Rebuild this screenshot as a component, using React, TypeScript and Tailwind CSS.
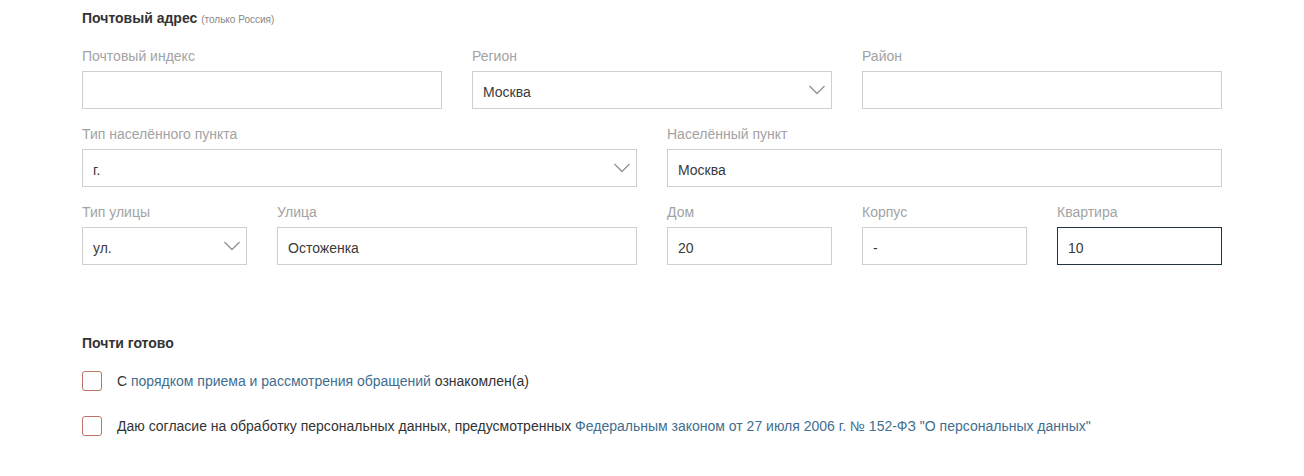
import { ReactNode } from 'react'

function Chevron() {
  return (
    <svg width="18" height="11" viewBox="0 0 18 11" className="absolute right-[4px] top-1/2 -translate-y-1/2 mr-[1px]">
      <path d="M1.5 1.5 L9 9 L16.5 1.5" fill="none" stroke="#949494" strokeWidth="1.4" />
    </svg>
  )
}

function Field({
  label,
  value = '',
  span,
  select = false,
  active = false,
}: {
  label: string
  value?: string
  span: string
  select?: boolean
  active?: boolean
}) {
  return (
    <div className={span}>
      <div className="text-[14px] leading-[20px] text-[#a3a3a3] mt-[4px] mb-[5px]">{label}</div>
      <div
        className={`relative h-[38px] border bg-white flex items-center pl-[10px] text-[14px] text-[#3a3a3a] ${
          active ? 'border-[#1f3442]' : 'border-[#cfcfcf]'
        }`}
      >
        <span className="mt-[4px]">{value}</span>
        {select && <Chevron />}
      </div>
    </div>
  )
}

function Check({ children }: { children: ReactNode }) {
  return (
    <div className="flex items-center gap-[15px] h-[22px]">
      <span className="w-[20px] h-[20px] border border-[#bf716b] rounded-[3px] bg-white shrink-0" />
      <span className="text-[14px] text-[#333]">{children}</span>
    </div>
  )
}

export default function App() {
  return (
    <div className="w-[1304px] h-[476px] bg-white overflow-hidden font-['Liberation_Sans',Arial,sans-serif]">
      <div className="w-[1140px] ml-[82px] pt-[9px]">
        {/* Почтовый адрес */}
        <h2 className="text-[14px] leading-[18px] font-bold text-[#333]">
          Почтовый адрес <span className="text-[10px] font-normal text-[#888]">(только Россия)</span>
        </h2>

        <div className="grid grid-cols-6 gap-x-[30px] gap-y-[11px] mt-[13px]">
          <Field span="col-span-2" label="Почтовый индекс" />
          <Field span="col-span-2" label="Регион" value="Москва" select />
          <Field span="col-span-2" label="Район" />

          <Field span="col-span-3" label="Тип населённого пункта" value="г." select />
          <Field span="col-span-3" label="Населённый пункт" value="Москва" />

          <Field span="col-span-1" label="Тип улицы" value="ул." select />
          <Field span="col-span-2" label="Улица" value="Остоженка" />
          <Field span="col-span-1" label="Дом" value="20" />
          <Field span="col-span-1" label="Корпус" value="-" />
          <Field span="col-span-1" label="Квартира" value="10" active />
        </div>

        {/* Почти готово */}
        <h2 className="text-[14px] leading-[18px] font-bold text-[#333] mt-[69px]">Почти готово</h2>
        <div className="flex flex-col gap-[23px] mt-[18px]">
          <Check>
            С <span className="text-[#3f6e91]">порядком приема и рассмотрения обращений</span> ознакомлен(а)
          </Check>
          <Check>
            Даю согласие на обработку персональных данных, предусмотренных{' '}
            <span className="text-[#3f6e91]">
              Федеральным законом от 27 июля 2006 г. № 152-ФЗ "О персональных данных"
            </span>
          </Check>
        </div>
      </div>
    </div>
  )
}
